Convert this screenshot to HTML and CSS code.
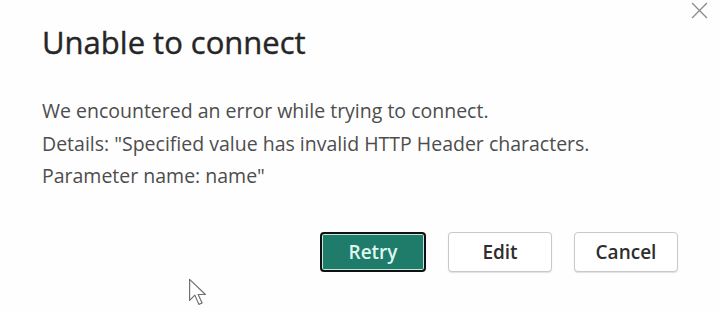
FILE: index.html
```html
<!DOCTYPE html>
<html lang="en">
<head>
<meta charset="utf-8">
<title>Unable to connect</title>
<link rel="stylesheet" href="styles.css">
</head>
<body>
<div class="dialog">
  <button class="close" aria-label="Close">
    <svg viewBox="0 0 16 16" width="17" height="17"><path d="M1 1 L15 15 M15 1 L1 15" stroke="#8a8a8a" stroke-width="1.2" fill="none"/></svg>
  </button>
  <h1 class="title">Unable to connect</h1>
  <div class="message">
    <p>We encountered an error while trying to connect.</p>
    <p>Details: "Specified value has invalid HTTP Header characters.</p>
    <p>Parameter name: name"</p>
  </div>
  <div class="actions">
    <button class="btn primary">Retry</button>
    <button class="btn">Edit</button>
    <button class="btn">Cancel</button>
  </div>
  <svg class="cursor" viewBox="0 0 14 22" width="19" height="29">
    <path d="M1 1 L1 17 L5 13 L8 20 L10.5 19 L7.5 12.5 L13 12.5 Z" fill="#fff" stroke="#707070" stroke-width="0.9" stroke-linejoin="round"/>
  </svg>
</div>
</body>
</html>
```
FILE: styles.css
```css
html, body {
  margin: 0;
  padding: 0;
  background: #ffffff;
}

.dialog {
  position: relative;
  width: 720px;
  height: 311px;
  box-sizing: border-box;
  padding: 22px 42px 0 42px;
  font-family: "Open Sans", "Noto Sans", sans-serif;
  background: #fefefe;
}

.close {
  position: absolute;
  top: 2px;
  right: 12px;
  width: 17px;
  height: 17px;
  padding: 0;
  border: 0;
  background: transparent;
  display: flex;
}

.title {
  margin: 0;
  font-size: 31px;
  line-height: 40px;
  font-weight: 400;
  color: #262626;
  -webkit-text-stroke: 0.4px #262626;
}

.message {
  margin-top: 33px;
  font-size: 19.5px;
  line-height: 32.5px;
  color: #4d4d4d;
}

.message p {
  margin: 0;
}

.actions {
  margin-top: 39px;
  display: flex;
  justify-content: flex-end;
  gap: 22px;
  width: 636px;
}

.btn {
  width: 104px;
  height: 40px;
  box-sizing: border-box;
  border: 1px solid #c9c9c9;
  border-radius: 4px;
  background: #ffffff;
  box-shadow: 0 1px 1px rgba(0, 0, 0, 0.12);
  font-family: "Open Sans", "Noto Sans", sans-serif;
  font-size: 19px;
  font-weight: 600;
  color: #2e2e2e;
  padding: 0;
}

.btn.primary {
  width: 106px;
  background: #1f7c6a;
  color: #dff7ee;
  border: 2px solid #111;
  box-shadow: inset 0 0 0 1px #bfeadb;
}

.cursor {
  position: absolute;
  left: 188px;
  top: 278px;
}
```
